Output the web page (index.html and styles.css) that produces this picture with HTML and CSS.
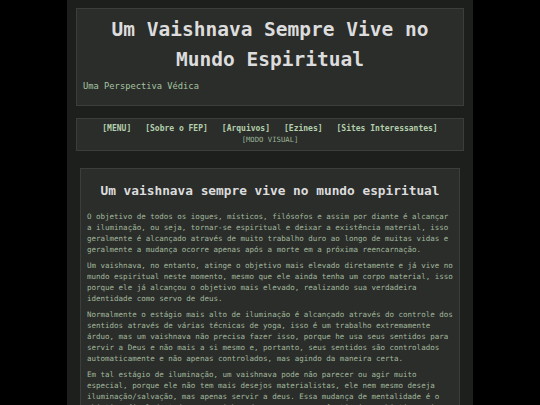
FILE: index.html
```html
<!DOCTYPE html>
<html lang="pt">
<head>
<meta charset="utf-8">
<title>Um Vaishnava Sempre Vive no Mundo Espiritual</title>
<link rel="stylesheet" href="styles.css">
</head>
<body>
<div class="page">
  <header class="masthead">
    <h1 class="site-title">Um Vaishnava Sempre Vive no Mundo Espiritual</h1>
    <p class="tagline">Uma Perspectiva Védica</p>
  </header>
  <nav class="menu">
    <div class="menu-links">
      <a href="#">[MENU]</a>
      <a href="#">[Sobre o FEP]</a>
      <a href="#">[Arquivos]</a>
      <a href="#">[Ezines]</a>
      <a href="#">[Sites Interessantes]</a>
    </div>
    <div class="menu-mode"><a href="#">[MODO VISUAL]</a></div>
  </nav>
  <main class="article">
    <h2 class="article-title">Um vaishnava sempre vive no mundo espiritual</h2>
    <p>O objetivo de todos os iogues, místicos, filósofos e assim por diante é alcançar a iluminação, ou seja, tornar-se espiritual e deixar a existência material, isso geralmente é alcançado através de muito trabalho duro ao longo de muitas vidas e geralmente a mudança ocorre apenas após a morte em a próxima reencarnação.</p>
    <p>Um vaishnava, no entanto, atinge o objetivo mais elevado diretamente e já vive no mundo espiritual neste momento, mesmo que ele ainda tenha um corpo material, isso porque ele já alcançou o objetivo mais elevado, realizando sua verdadeira identidade como servo de deus.</p>
    <p>Normalmente o estágio mais alto de iluminação é alcançado através do controle dos sentidos através de várias técnicas de yoga, isso é um trabalho extremamente árduo, mas um vaishnava não precisa fazer isso, porque he usa seus sentidos para servir a Deus e não mais a si mesmo e, portanto, seus sentidos são controlados automaticamente e não apenas controlados, mas agindo da maneira certa.</p>
    <p>Em tal estágio de iluminação, um vaishnava pode não parecer ou agir muito especial, porque ele não tem mais desejos materialistas, ele nem mesmo deseja iluminação/salvação, mas apenas servir a deus. Essa mudança de mentalidade é o objetivo final de todos os caminhos do yoga e, se você atingir o objetivo mais elevado, você já estará vivendo no mundo espiritual.</p>
  </main>
</div>
</body>
</html>
```
FILE: styles.css
```css
html, body {
  margin: 0;
  padding: 0;
  background: #000;
  height: 100%;
}
body {
  font-family: "DejaVu Sans Mono", "Liberation Mono", monospace;
  overflow: hidden;
}
.page {
  width: 388px;
  margin: 0 auto;
  padding: 8px 9px 0;
  background: #1d1f1d;
  min-height: 100%;
  box-sizing: content-box;
}
.masthead {
  background: #2b2d2b;
  border: 1px solid #3c3e3c;
  padding: 6px 6px 13px;
}
.site-title {
  margin: 0;
  font-size: 19.5px;
  line-height: 30px;
  font-weight: bold;
  text-align: center;
  color: #dcdcdc;
}
.tagline {
  margin: 5px 0 0;
  font-size: 8.75px;
  line-height: 12px;
  color: #a6c4a0;
}
.menu {
  margin-top: 12px;
  background: #2b2d2b;
  border: 1px solid #3c3e3c;
  padding: 4px 4px 5px;
  text-align: center;
}
.menu a {
  text-decoration: none;
}
.menu-links {
  display: flex;
  justify-content: center;
  gap: 14px;
  font-size: 8px;
  line-height: 11px;
  font-weight: bold;
}
.menu-links a {
  color: #b4d0ac;
}
.menu-mode {
  font-size: 7.25px;
  line-height: 11px;
}
.menu-mode a {
  color: #9ab494;
}
.article {
  margin: 17px 4px 0;
  background: #2b2d2b;
  border: 1px solid #3c3e3c;
  padding: 13px 6px 20px;
}
.article-title {
  margin: 0 0 12px;
  font-size: 12.8px;
  line-height: 17px;
  font-weight: bold;
  text-align: center;
  color: #dcdcdc;
}
.article p {
  margin: 0 0 5px;
  font-size: 7.5px;
  line-height: 11px;
  color: #a2b99c;
}
```
